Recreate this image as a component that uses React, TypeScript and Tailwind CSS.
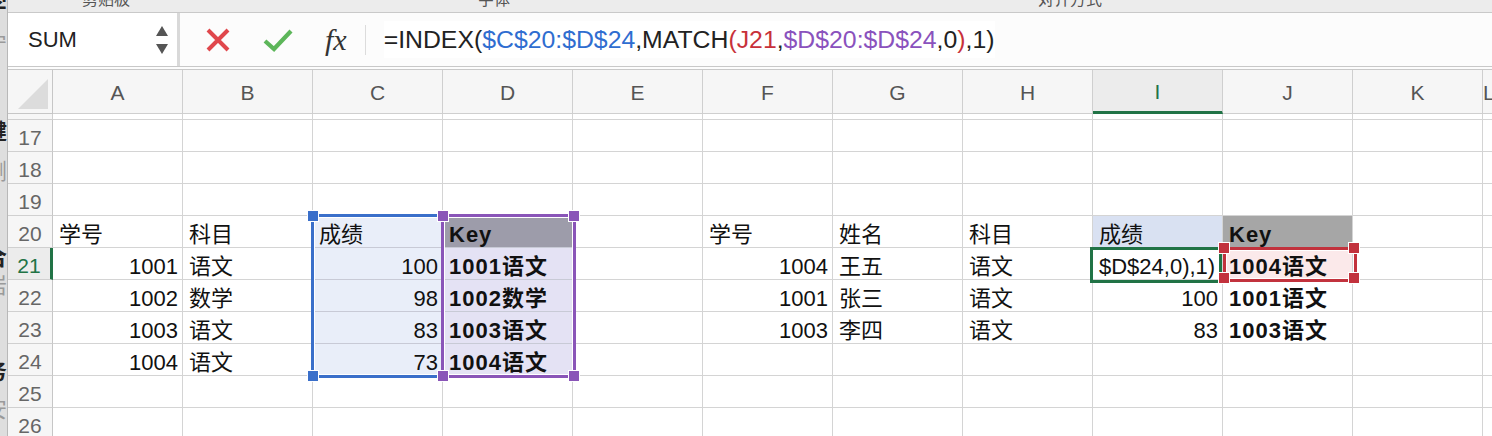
import React from "react";

type Cell = { t: string; r?: boolean; b?: boolean };

const data: Record<string, Cell> = {
  A20: { t: "学号" }, B20: { t: "科目" }, C20: { t: "成绩" }, D20: { t: "Key", b: true },
  A21: { t: "1001", r: true }, B21: { t: "语文" }, C21: { t: "100", r: true }, D21: { t: "1001语文", b: true },
  A22: { t: "1002", r: true }, B22: { t: "数学" }, C22: { t: "98", r: true }, D22: { t: "1002数学", b: true },
  A23: { t: "1003", r: true }, B23: { t: "语文" }, C23: { t: "83", r: true }, D23: { t: "1003语文", b: true },
  A24: { t: "1004", r: true }, B24: { t: "语文" }, C24: { t: "73", r: true }, D24: { t: "1004语文", b: true },
  F20: { t: "学号" }, G20: { t: "姓名" }, H20: { t: "科目" }, I20: { t: "成绩" }, J20: { t: "Key", b: true },
  F21: { t: "1004", r: true }, G21: { t: "王五" }, H21: { t: "语文" }, I21: { t: "$D$24,0),1)" }, J21: { t: "1004语文", b: true },
  F22: { t: "1001", r: true }, G22: { t: "张三" }, H22: { t: "语文" }, I22: { t: "100", r: true }, J22: { t: "1001语文", b: true },
  F23: { t: "1003", r: true }, G23: { t: "李四" }, H23: { t: "语文" }, I23: { t: "83", r: true }, J23: { t: "1003语文", b: true },
};

const bgs: Record<string, string> = {
  C20: "bg-[#e9eef9]", C21: "bg-[#e9eef9]", C22: "bg-[#e9eef9]", C23: "bg-[#e9eef9]", C24: "bg-[#e9eef9]",
  D20: "bg-[#9d9caa]", D21: "bg-[#e4e2f4]", D22: "bg-[#e4e2f4]", D23: "bg-[#e4e2f4]", D24: "bg-[#e4e2f4]",
  I20: "bg-[#d9e1f2]", J20: "bg-[#a6a6a6]", J21: "bg-[#fbe9ea]",
};

const cols = ["A", "B", "C", "D", "E", "F", "G", "H", "I", "J", "K", "L"];
const rows = [17, 18, 19, 20, 21, 22, 23, 24, 25, 26];

function inRange(k: string) {
  const c = k[0];
  const r = parseInt(k.slice(1));
  return (c === "C" || c === "D") && r >= 20 && r <= 24;
}

function GridCell({ k }: { k: string }) {
  const d = data[k];
  const bg = bgs[k] ?? "bg-white";
  const border = inRange(k) ? "border-[#c8cad6]" : "border-[#d4d4d4]";
  return (
    <div
      className={`${bg} ${border} border-r border-b flex items-end overflow-hidden whitespace-nowrap pl-[6px] pr-[4px] pb-[0px] text-[22px] leading-[25px] text-[#111] ${
        d?.r ? "justify-end" : "justify-start"
      } ${d?.b ? "font-bold tracking-[1px]" : ""}`}
    >
      {d?.t}
    </div>
  );
}

function Handle({ cls }: { cls: string }) {
  return <div className={`absolute w-[10px] h-[10px] ring-1 ring-white ${cls}`} />;
}

export default function App() {
  return (
    <div className="w-[1492px] h-[436px] overflow-hidden bg-white flex font-['Liberation_Sans','Noto_Sans_CJK_SC',sans-serif]">
      {/* window behind, left edge */}
      <div className="w-[8px] h-full shrink-0 bg-[#dedede] border-r border-[#b8b8b8] overflow-hidden flex flex-col text-[22px] leading-[24px] font-bold">
        <span className="shrink-0 ml-[-15px] mt-[-6px] text-[#222]">字</span>
        <span className="shrink-0 ml-[-15px] mt-[14px] text-[#9a9a9a] font-normal">宁</span>
        <span className="shrink-0 ml-[-15px] mt-[64px] text-[#222]">键</span>
        <span className="shrink-0 ml-[-15px] mt-[16px] text-[#9a9a9a] font-normal">删</span>
        <span className="shrink-0 ml-[-15px] mt-[62px] text-[#222]">合</span>
        <span className="shrink-0 ml-[-15px] mt-[4px] text-[#9a9a9a] font-normal">岩</span>
        <span className="shrink-0 ml-[-15px] mt-[62px] text-[#222]">务</span>
        <span className="shrink-0 ml-[-15px] mt-[14px] text-[#9a9a9a] font-normal">安</span>
      </div>

      <div className="flex-1 flex flex-col min-w-0 overflow-hidden">
        {/* ribbon remnant */}
        <div className="h-[13px] shrink-0 bg-[#ececec] border-b border-[#c9c9c9] overflow-hidden flex text-[16px] leading-[16px] text-[#555]">
          <span className="ml-[74px] mt-[-8px]">剪贴板</span>
          <span className="ml-[348px] mt-[-8px]">字体</span>
          <span className="ml-[528px] mt-[-8px]">对齐方式</span>
        </div>

        {/* formula bar */}
        <div className="h-[57px] shrink-0 flex bg-[#fcfcfc] border-b-[4px] border-double border-[#c8c8c8]">
          <div className="w-[172px] bg-white flex items-center justify-between pl-[20px] pr-[8px] border-r-[3px] border-[#d9d9d9]">
            <span className="text-[22px] text-[#222]">SUM</span>
            <svg width="14" height="34" viewBox="0 0 14 34">
              <polygon points="7,3 13,13 1,13" fill="#555" />
              <polygon points="1,21 13,21 7,31" fill="#555" />
            </svg>
          </div>
          <div className="flex items-center">
            <svg className="ml-[25px]" width="26" height="24" viewBox="0 0 26 24">
              <path d="M3 2 L23 22 M23 2 L3 22" stroke="#e0474c" strokeWidth="4" />
            </svg>
            <svg className="ml-[32px]" width="30" height="24" viewBox="0 0 30 24">
              <path d="M2 13 L11 21 L28 3" stroke="#5db65a" strokeWidth="4.2" fill="none" />
            </svg>
            <span className="ml-[32px] font-['Liberation_Serif',serif] italic text-[30px] leading-[30px] text-[#333] pr-[2px]">fx</span>
            <div className="ml-[16px] w-px h-[30px] bg-[#dcdcdc]" />
            <div className="ml-[18px] text-[24.8px] text-[#222] whitespace-nowrap bg-white">
              =INDEX(<span className="text-[#2f6dd0]">$C$20:$D$24</span>,MATCH<span className="text-[#c8313a]">(J21</span>,
              <span className="text-[#8a52bd]">$D$20:$D$24</span>,0<span className="text-[#c8313a]">)</span>,1)
            </div>
          </div>
        </div>

        {/* grid */}
        <div className="relative shrink-0 grid grid-cols-[45px_repeat(11,130px)_1fr] grid-rows-[44px_6px_repeat(10,32px)]">
          {/* header row */}
          <div className="bg-[#f6f6f6] border-r border-b border-[#c6c6c6] flex items-end justify-end pr-[4px] pb-[4px]">
            <svg width="30" height="30" viewBox="0 0 30 30">
              <polygon points="30,0 30,30 0,30" fill="#dcdcdc" />
            </svg>
          </div>
          {cols.map((c) => (
            <div
              key={c}
              className={`border-r border-b border-[#cfcfcf] flex items-center justify-center pt-[3px] text-[21px] ${
                c === "I" ? "bg-[#ececec] text-[#217346] border-b-[3px] border-b-[#217346]" : "bg-[#f6f6f6] text-[#555]"
              }`}
            >
              {c}
            </div>
          ))}
          {/* row 16 sliver */}
          <div className="bg-[#f6f6f6] border-r border-b border-[#cfcfcf]" />
          {cols.map((c) => (
            <div key={c + "16"} className="bg-white border-r border-b border-[#d4d4d4]" />
          ))}
          {rows.map((r) => (
            <React.Fragment key={r}>
              <div
                className={`border-b border-[#d0d0d0] flex items-center justify-center pt-[5px] text-[21px] ${
                  r === 21
                    ? "bg-[#ececec] text-[#217346] border-r-[3px] border-r-[#217346]"
                    : "bg-[#f6f6f6] text-[#666] border-r border-r-[#c6c6c6]"
                }`}
              >
                {r}
              </div>
              {cols.map((c) => (
                <GridCell key={c + r} k={c + r} />
              ))}
            </React.Fragment>
          ))}

          {/* C20:C24 reference range */}
          <div className="absolute left-[303px] top-[144px] w-[134px] h-[164px] border-[3px] border-[#3a6fca] shadow-[inset_0_0_0_1px_#ffffff] pointer-events-none" />
          {/* D20:D24 reference range */}
          <div className="absolute left-[433px] top-[144px] w-[135px] h-[164px] border-[3px] border-[#8a55b8] shadow-[inset_0_0_0_1px_#ffffff] pointer-events-none" />
          <div className="absolute left-[300px] top-[141px]"><Handle cls="bg-[#3a6fca]" /></div>
          <div className="absolute left-[300px] top-[301px]"><Handle cls="bg-[#3a6fca]" /></div>
          <div className="absolute left-[430px] top-[141px]"><Handle cls="bg-[#8a55b8]" /></div>
          <div className="absolute left-[430px] top-[301px]"><Handle cls="bg-[#8a55b8]" /></div>
          <div className="absolute left-[561px] top-[141px]"><Handle cls="bg-[#8a55b8]" /></div>
          <div className="absolute left-[561px] top-[301px]"><Handle cls="bg-[#8a55b8]" /></div>

          {/* active cell I21 */}
          <div className="absolute left-[1082px] top-[177px] w-[132px] h-[36px] border-[3px] border-[#217346] pointer-events-none" />
          {/* J21 reference */}
          <div className="absolute left-[1215px] top-[177px] w-[134px] h-[35px] border-[3px] border-[#c2323d] shadow-[inset_0_0_0_1px_#ffffff] pointer-events-none" />
          <div className="absolute left-[1211px] top-[173px]"><Handle cls="bg-[#c2323d]" /></div>
          <div className="absolute left-[1341px] top-[173px]"><Handle cls="bg-[#c2323d]" /></div>
          <div className="absolute left-[1211px] top-[203px]"><Handle cls="bg-[#c2323d]" /></div>
          <div className="absolute left-[1341px] top-[203px]"><Handle cls="bg-[#c2323d]" /></div>
        </div>
      </div>
    </div>
  );
}
